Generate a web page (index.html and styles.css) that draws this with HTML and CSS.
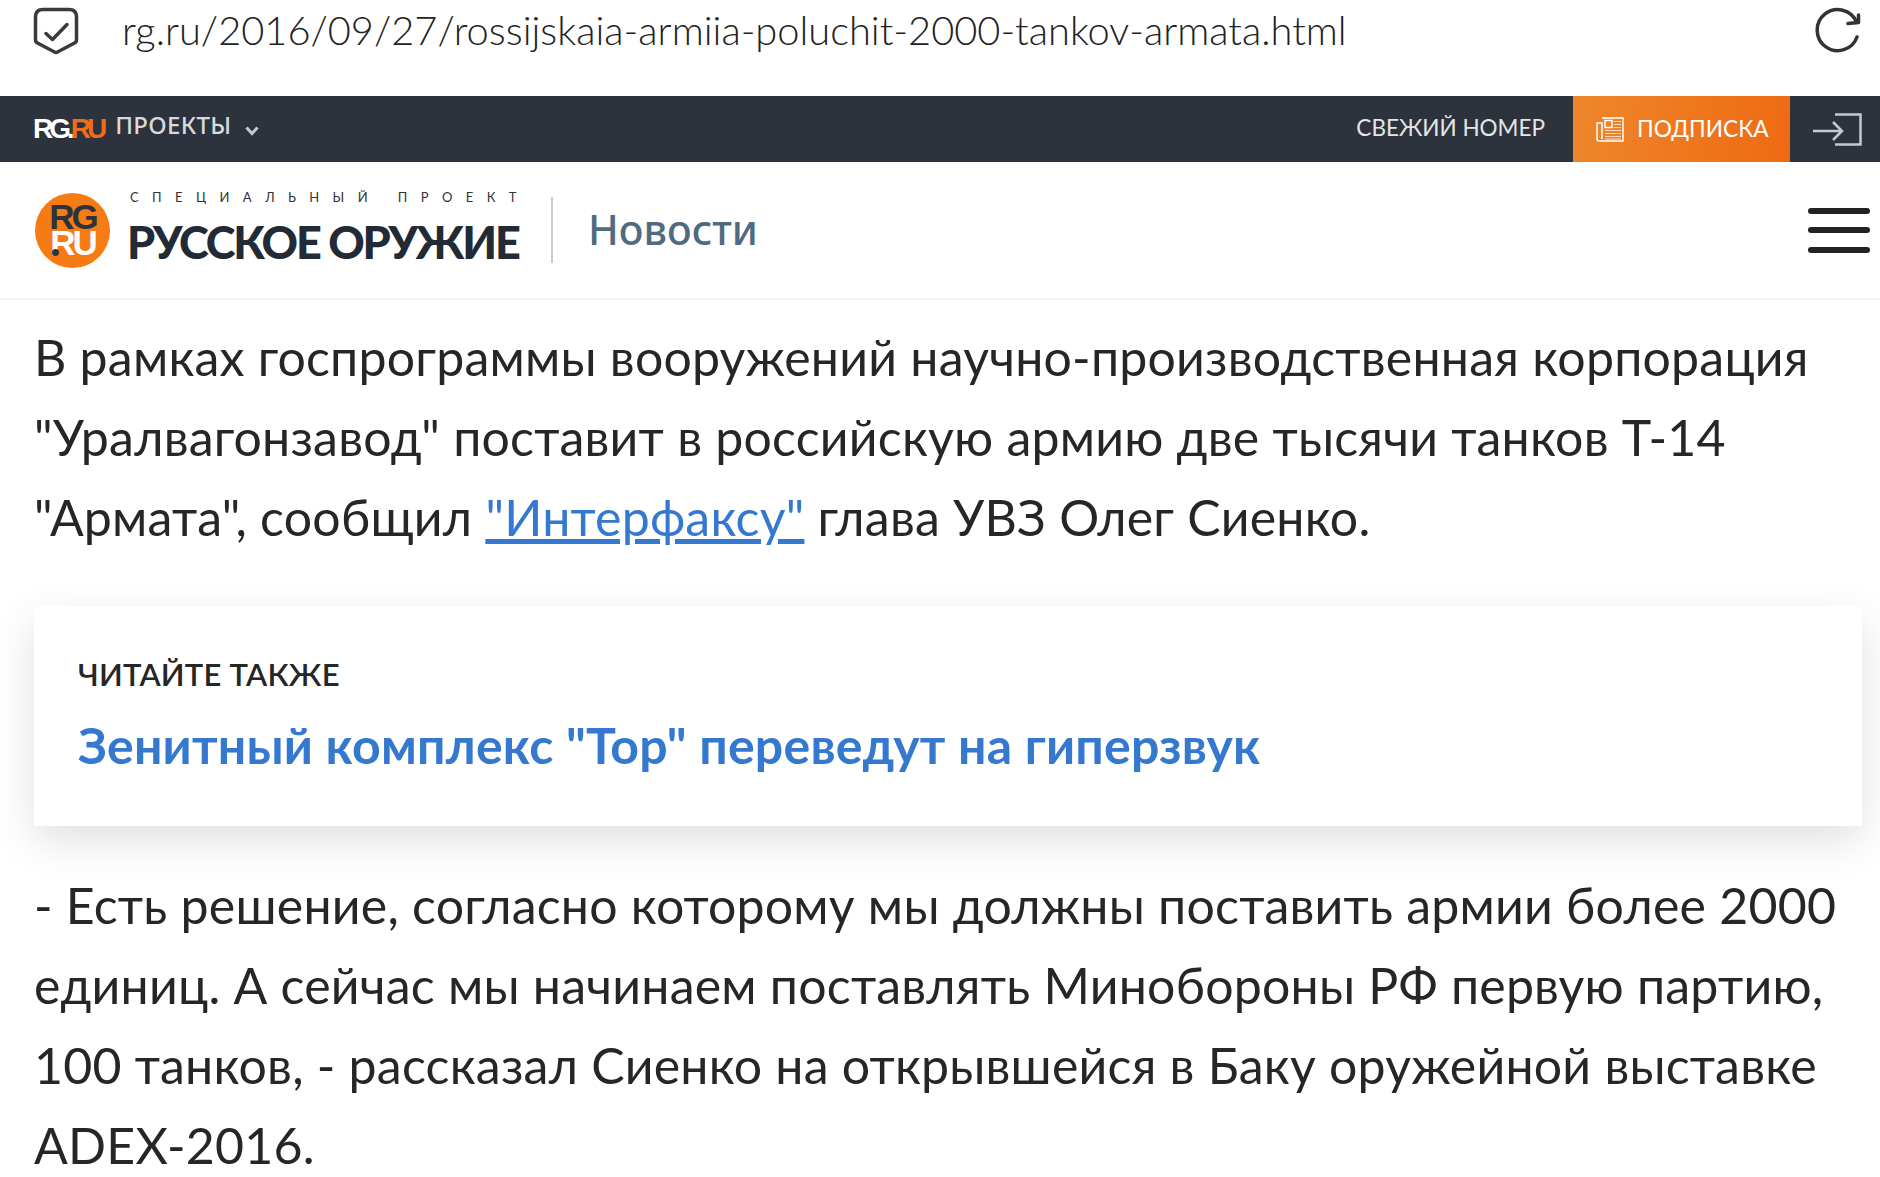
FILE: index.html
```html
<!DOCTYPE html>
<html lang="ru">

<head>
  <meta charset="UTF-8">
  <title>Российская армия получит 2000 танков Армата</title>
  <link rel="stylesheet" href="styles.css">
</head>

<body>
  <div class="addressbar">
    <svg class="shield" width="46" height="48" viewBox="0 0 46 48" fill="none" stroke="#3a3a3a">
      <path d="M10 2.500H36Q43.500 2.500 43.500 10V33Q43.500 35 41.500 36L24.500 45Q23 46 21.500 45L4.500 36Q2.500 35 2.500 33V10Q2.500 2.500 10 2.500Z" stroke-width="3.500" stroke-linejoin="round" />
      <path d="M13 26.500L19.500 32.500 34 17.500" stroke-width="3.500" stroke-linecap="round" stroke-linejoin="round" />
    </svg>
    <span class="url">rg.ru/2016/09/27/rossijskaia-armiia-poluchit-2000-tankov-armata.html</span>
    <svg class="reload" width="48" height="46" viewBox="0 0 48 46" fill="none" stroke="#333" stroke-width="3.500" stroke-linecap="round" stroke-linejoin="round">
      <path d="M43 30A20.500 20.500 0 1 1 42.500 15" />
      <path d="M44.500 8V15.500L34 16.500" />
    </svg>
  </div>

  <div class="topbar">
    <span class="rg_small"><span class="white">RG.</span><span class="orange">RU</span></span>
    <span class="projects">ПРОЕКТЫ</span>
    <svg class="chevron" width="14" height="10" viewBox="0 0 14 10" fill="none" stroke="#c8c9cb" stroke-width="3">
      <path d="M1.500 1.500L7 7.500 12.500 1.500" />
    </svg>
    <span class="fresh">СВЕЖИЙ НОМЕР</span>
    <a class="subscribe">
      <svg width="28" height="25" viewBox="0 0 28 25" fill="none" stroke="#fff" stroke-width="1.500">
        <path d="M6 1H27V24H3Q1 24 1 22V6H6V22" />
        <rect x="9" y="3.500" width="7" height="7" />
        <path d="M18 4.500H25M18 7.500H25M18 10.500H25M9 13.500H25M9 16.500H25M9 19.500H25M9 22H25" stroke-width="1" stroke-opacity=".7" />
      </svg>
      <span>ПОДПИСКА</span>
    </a>
    <span class="login">
      <svg width="49" height="33" viewBox="0 0 49 33" fill="none" stroke="#c8c9cb" stroke-width="2.500">
        <path d="M22 1.500H47.500V31.500H22" />
        <path d="M0 18H29M20 9L29 18 20 27" />
      </svg>
    </span>
  </div>

  <div class="logobar">
    <div class="round_logo"><span class="round_rg">RG</span><span class="round_ru">RU</span></div>
    <div class="title_block">
      <div class="special">специальный проект</div>
      <div class="weapons">РУССКОЕ ОРУЖИЕ</div>
    </div>
    <div class="section">Новости</div>
    <div class="burger"><i></i><i></i><i></i></div>
  </div>

  <div class="article">
    <p>В рамках госпрограммы вооружений научно-производственная корпорация<br>"Уралвагонзавод" поставит в российскую армию две тысячи танков Т-14<br>"Армата", сообщил <a href="#">"Интерфаксу"</a> глава УВЗ Олег Сиенко.</p>

    <div class="also">
      <div class="also_label">ЧИТАЙТЕ ТАКЖЕ</div>
      <div class="also_link">Зенитный комплекс "Тор" переведут на гиперзвук</div>
    </div>

    <p>- Есть решение, согласно которому мы должны поставить армии более 2000<br>единиц. А сейчас мы начинаем поставлять Минобороны РФ первую партию,<br>100 танков, - рассказал Сиенко на открывшейся в Баку оружейной выставке<br>ADEX-2016.</p>
  </div>
</body>

</html>
```

FILE: styles.css
```css
body {
  margin: 0;
  background-color: #fff;
  color: #262626;
  font-family: Lato, "Noto Sans", sans-serif;
  overflow: hidden;
}

.addressbar {
  display: flex;
  align-items: center;
  height: 96px;
  padding: 0 18px 0 33px;
  box-sizing: border-box;
}

.shield {
  margin-top: -35px;
}

.url {
  margin: -37px 0 0 43px;
  font-size: 39.800px;
  font-weight: 300;
  color: #222;
  flex: 1;
}

.reload {
  margin-top: -36px;
}

.topbar {
  display: flex;
  align-items: center;
  height: 66px;
  padding-left: 33px;
  background-color: #2d333c;
}

.rg_small {
  font-family: "Liberation Sans", sans-serif;
  font-size: 28px;
  font-weight: 700;
  letter-spacing: -4px;
}

.white {
  color: #fff;
}

.orange {
  color: #ef6c1a;
}

.projects {
  margin: -9px 0 0 12px;
  font-size: 24px;
  font-weight: 500;
  letter-spacing: .3px;
  color: #d8d9db;
  font-family: "Noto Sans", sans-serif;
}

.chevron {
  margin: 4px 0 0 14px;
}

.fresh {
  margin: -4px 28px 0 auto;
  font-size: 22.500px;
  color: #e4e5e7;
}

.subscribe {
  display: flex;
  align-items: center;
  gap: 13px;
  width: 217px;
  height: 66px;
  padding-left: 23px;
  box-sizing: border-box;
  background: linear-gradient(100deg, #ee872c, #ee6a12);
  color: #fff;
  font-size: 22.700px;
}

.subscribe span {
  margin-top: -2px;
}

.login {
  display: flex;
  align-items: center;
  justify-content: flex-end;
  width: 72px;
  padding-right: 18px;
}

.logobar {
  display: flex;
  align-items: center;
  height: 138px;
  padding: 0 10px 0 35px;
  box-sizing: border-box;
  border-bottom: 2px solid #f3f4f5;
}

.round_logo {
  display: flex;
  flex-direction: column;
  align-items: center;
  justify-content: center;
  width: 75px;
  height: 75px;
  border-radius: 50%;
  background-color: #f77b14;
  font-family: "Liberation Sans", sans-serif;
  font-size: 35px;
  font-weight: 700;
  letter-spacing: -3px;
  line-height: 26px;
}

.round_rg {
  color: #2d333c;
}

.round_ru {
  position: relative;
  color: #fff;
}

/* dark dot of .RU sits on the R */
.round_ru::before {
  content: "";
  position: absolute;
  left: 2px;
  bottom: 0;
  width: 7px;
  height: 7px;
  border-radius: 50%;
  background-color: #2d333c;
}

.title_block {
  margin-left: 17px;
  width: 392px;
  padding-right: 32px;
  border-right: 2px solid #c9ccce;
  height: 66px;
}

.special {
  padding-left: 3px;
  font-size: 13px;
  letter-spacing: 13.400px;
  line-height: 14px;
  text-transform: uppercase;
  color: #333;
  white-space: nowrap;
  margin-top: -7px;
}

.weapons {
  margin-top: 12px;
  font-size: 45px;
  font-weight: 900;
  line-height: 52px;
  letter-spacing: -2.150px;
  color: #222a36;
  white-space: nowrap;
}

.section {
  margin: -2px 0 0 35px;
  font-size: 41px;
  font-weight: 500;
  font-family: "Noto Sans", sans-serif;
  color: #4f6b80;
}

.burger {
  margin-left: auto;
  display: flex;
  flex-direction: column;
  gap: 13.500px;
  width: 62px;
}

.burger i {
  display: block;
  height: 6px;
  border-radius: 3px;
  background-color: #222;
}

.article {
  padding: 17px 18px 0 34px;
  font-size: 50px;
  line-height: 80px;
  letter-spacing: .23px;
  white-space: nowrap;
}

.article p {
  margin: 0;
}

.article a {
  color: #3478cf;
}

.also {
  margin: 49px 0 39px;
  height: 220px;
  padding: 43px 44px 0;
  box-sizing: border-box;
  background-color: #fff;
  box-shadow: 0 15px 40px rgba(0, 0, 0, .12);
}

.also_label {
  font-size: 31px;
  font-weight: 600;
  line-height: 50px;
  letter-spacing: .2px;
  color: #262626;
}

.also_link {
  margin-top: 15px;
  font-size: 50px;
  font-weight: 700;
  line-height: 62px;
  letter-spacing: .23px;
  color: #3478cf;
}
```
